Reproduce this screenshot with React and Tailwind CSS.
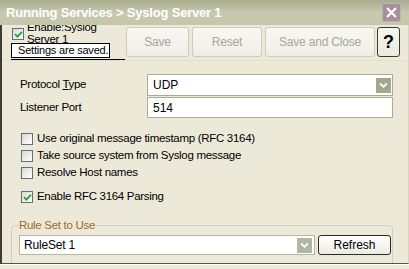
import React from 'react';

const font = { fontFamily: '"Liberation Sans", Arial, sans-serif' };

function Check({ checked }) {
  return (
    <span className="w-[12px] h-[12px] shrink-0 border border-[#5d7084] bg-gradient-to-br from-[#d9d9d2] to-white flex items-center justify-center">
      {checked && (
        <svg width="9" height="9" viewBox="0 0 9 9">
          <path d="M1 4.2 L3.4 6.6 L8 1.8" fill="none" stroke="#2aa12a" strokeWidth="1.8" />
        </svg>
      )}
    </span>
  );
}

function Chevron({ light }) {
  return (
    <span className={`w-[15px] h-[15px] flex items-center justify-center ${light ? 'bg-[#b0b7a3]' : 'bg-[#a2a88b]'}`}>
      <svg width="9" height="7" viewBox="0 0 9 7">
        <path d="M1.2 1.5 L4.5 4.8 L7.8 1.5" fill="none" stroke="#fff" strokeWidth="1.8" />
      </svg>
    </span>
  );
}

function ToolButton({ children, w }) {
  return (
    <div className={`${w} h-[30px] rounded-[3px] border border-[#cdcbbd] bg-gradient-to-b from-[#f8f7f2] to-[#efeee6] flex items-center justify-center text-[#a8a79e] text-[12px] tracking-[-0.2px]`}>
      {children}
    </div>
  );
}

function Row({ label, checked, mt }) {
  return (
    <div className={`h-[16px] flex items-center ${mt || ''}`}>
      <Check checked={checked} />
      <span className="ml-[4px] text-[11.5px] tracking-[-0.3px] text-black whitespace-nowrap">{label}</span>
    </div>
  );
}

export default function App() {
  return (
    <div className="w-[409px] h-[269px] bg-[#ece9d8] flex flex-col overflow-hidden relative select-none" style={font}>
      {/* Title bar */}
      <div className="h-[25px] shrink-0 bg-gradient-to-b from-[#a9ad8e] via-[#c6c9ae] to-[#c4c7ac] flex items-center justify-between pl-[6px] pr-[8px]">
        <span className="text-white font-bold text-[13px] tracking-[-0.2px] whitespace-nowrap">Running Services &gt; Syslog Server 1</span>
        <div className="w-[19px] h-[19px] rounded-[2px] bg-[#a88e9b] border border-[#c2b0b8] flex items-center justify-center">
          <svg width="13" height="13" viewBox="0 0 13 13">
            <path d="M2 2 L11 11 M11 2 L2 11" stroke="#fff" strokeWidth="2.2" />
          </svg>
        </div>
      </div>

      {/* Body */}
      <div className="flex-1 flex flex-col border-l-2 border-l-[#3d3d36] border-r border-r-[#d6d3c2] border-b border-b-[#55554c] overflow-hidden">
        {/* Toolbar */}
        <div className="h-[36px] shrink-0 flex items-start border-b border-[#e2dfcd]">
          <div className="w-[124px] flex items-start pl-[10px] pt-[3px]">
            <Check checked />
            <div className="ml-[3px] -mt-[7px] text-[11.5px] leading-[12px] tracking-[-0.3px] text-black whitespace-nowrap">
              <div>Enable:Syslog</div>
              <div>Server 1</div>
            </div>
          </div>
          <div className="flex items-start gap-[3px] pt-[2px]">
            <ToolButton w="w-[63px]">Save</ToolButton>
            <ToolButton w="w-[70px]">Reset</ToolButton>
            <ToolButton w="w-[110px]">Save and Close</ToolButton>
            <div className="w-[23px] h-[30px] -ml-[1px] rounded-[3px] border border-[#3b3b2e] bg-gradient-to-b from-[#f8f7f0] to-[#ebeadf] flex items-center justify-center text-black font-bold text-[18px]">?</div>
          </div>
        </div>

        {/* Protocol */}
        <div className="mt-[13px] h-[22px] flex items-center">
          <span className="w-[145px] pl-[18px] text-[11.5px] tracking-[-0.3px] text-black">
            Protocol <span className="underline">T</span>ype
          </span>
          <div className="w-[246px] h-[22px] bg-white border border-[#a9ac92] flex items-center justify-between pl-[5px] pr-[1px]">
            <span className="text-[12px] text-black">UDP</span>
            <Chevron />
          </div>
        </div>

        {/* Listener Port */}
        <div className="mt-[1px] h-[21px] flex items-center">
          <span className="w-[145px] pl-[18px] text-[11.5px] tracking-[-0.3px] text-black">Listener Port</span>
          <div className="w-[246px] h-[21px] bg-white border border-[#a9ac92] flex items-center pl-[5px]">
            <span className="text-[12px] text-black">514</span>
          </div>
        </div>

        {/* Options */}
        <div className="mt-[13px] pl-[19px] flex flex-col">
          <Row label="Use original message timestamp (RFC 3164)" />
          <Row label="Take source system from Syslog message" mt="mt-[1px]" />
          <Row label="Resolve Host names" mt="mt-[1px]" />
          <Row label="Enable RFC 3164 Parsing" checked mt="mt-[8px]" />
        </div>

        {/* Rule Set */}
        <fieldset className="mt-[14px] ml-[9px] w-[382px] h-[60px] shrink-0 border border-[#d0cebf] rounded-[4px] pl-[7px] pr-0 pt-0 m-0">
          <legend className="text-[11.5px] tracking-[-0.3px] text-[#a0682c] px-[1px] -ml-[1px] leading-[12px]">Rule Set to Use</legend>
          <div className="mt-[4px] flex items-center">
            <div className="w-[296px] h-[20px] bg-white border border-[#b4b7a0] flex items-center justify-between pl-[4px] pr-[2px]">
              <span className="text-[12px] tracking-[-0.2px] text-black">RuleSet 1</span>
              <Chevron light />
            </div>
            <div className="ml-[3px] w-[73px] h-[20px] rounded-[3px] border border-[#2b2b23] bg-gradient-to-b from-white to-[#ecebe2] flex items-center justify-center text-[12px] text-black">
              Refresh
            </div>
          </div>
        </fieldset>
      </div>
      <div className="h-[5px] shrink-0 border-t border-white bg-[#ece9d8]" />

      {/* Tooltip */}
      <div className="absolute left-[11px] top-[43px] w-[99px] h-[15px] bg-white border border-black flex items-center pl-[6px] text-[11px] tracking-[-0.2px] text-black leading-none whitespace-nowrap">
        Settings are saved.
      </div>
      <div className="absolute left-[11px] top-[59px] w-[114px] h-[1px] bg-black" />
    </div>
  );
}
